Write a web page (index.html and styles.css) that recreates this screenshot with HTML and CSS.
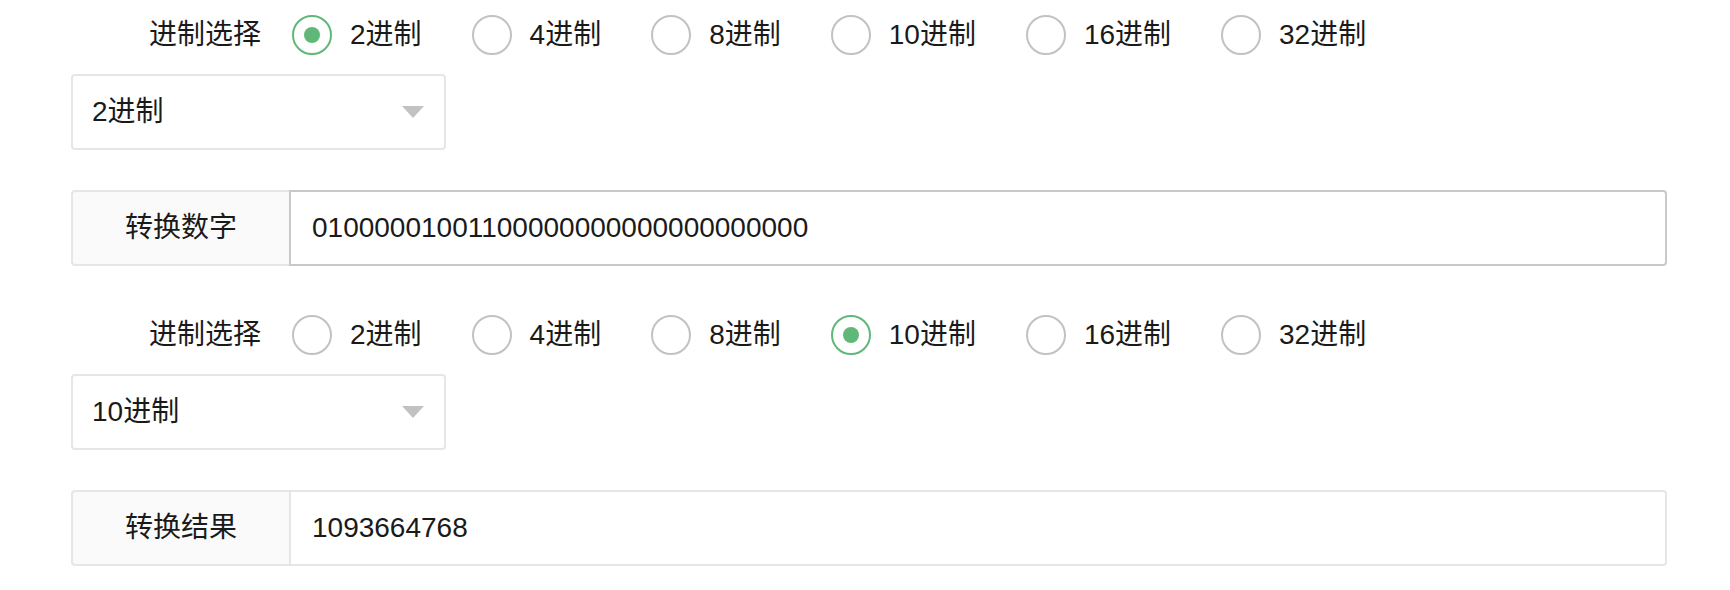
FILE: index.html
```html
<!DOCTYPE html>
<html lang="zh-CN">
<head>
<meta charset="utf-8">
<title>进制转换</title>
<link rel="stylesheet" href="styles.css">
</head>
<body>
<div class="page">
  <section class="block">
    <div class="radio-row">
      <div class="row-label">进制选择</div>
      <div class="radio checked"><span class="circle"></span><span class="radio-text">2进制</span></div>
      <div class="radio"><span class="circle"></span><span class="radio-text">4进制</span></div>
      <div class="radio"><span class="circle"></span><span class="radio-text">8进制</span></div>
      <div class="radio"><span class="circle"></span><span class="radio-text">10进制</span></div>
      <div class="radio"><span class="circle"></span><span class="radio-text">16进制</span></div>
      <div class="radio"><span class="circle"></span><span class="radio-text">32进制</span></div>
    </div>
    <div class="select"><span class="select-text">2进制</span><span class="caret"></span></div>
    <div class="pane">
      <div class="pane-label">转换数字</div>
      <div class="pane-input active">01000001001100000000000000000000</div>
    </div>
  </section>
  <section class="block">
    <div class="radio-row">
      <div class="row-label">进制选择</div>
      <div class="radio"><span class="circle"></span><span class="radio-text">2进制</span></div>
      <div class="radio"><span class="circle"></span><span class="radio-text">4进制</span></div>
      <div class="radio"><span class="circle"></span><span class="radio-text">8进制</span></div>
      <div class="radio checked"><span class="circle"></span><span class="radio-text">10进制</span></div>
      <div class="radio"><span class="circle"></span><span class="radio-text">16进制</span></div>
      <div class="radio"><span class="circle"></span><span class="radio-text">32进制</span></div>
    </div>
    <div class="select"><span class="select-text">10进制</span><span class="caret"></span></div>
    <div class="pane">
      <div class="pane-label">转换结果</div>
      <div class="pane-input">1093664768</div>
    </div>
  </section>
</div>
</body>
</html>
```

FILE: styles.css
```css
* { box-sizing: border-box; }
html, body { margin: 0; padding: 0; background: #fff; }
body {
  font-family: "Liberation Sans", "Noto Sans CJK SC", sans-serif;
  font-size: 28px;
  color: #1a1a1a;
  line-height: 40px;
}
.page {
  padding: 15px 63px 0 71px;
  display: flex;
  flex-direction: column;
  gap: 49px;
}
.block {
  display: flex;
  flex-direction: column;
}
.radio-row {
  display: flex;
  align-items: center;
  height: 40px;
}
.row-label {
  width: 220px;
  padding-right: 30px;
  text-align: right;
  flex: none;
}
.radio {
  display: flex;
  align-items: center;
  margin-left: 1px;
  margin-right: 49px;
}
.circle {
  width: 40px;
  height: 40px;
  border: 2.5px solid #c2c2c2;
  border-radius: 50%;
  flex: none;
  display: flex;
  align-items: center;
  justify-content: center;
  margin-right: 18px;
}
.radio.checked .circle { border-color: #5fb878; }
.radio.checked .circle::after {
  content: "";
  width: 16px;
  height: 16px;
  border-radius: 50%;
  background: #5fb878;
}
.select {
  margin-top: 19px;
  width: 375px;
  height: 76px;
  border: 2px solid #e6e6e6;
  border-radius: 4px;
  display: flex;
  align-items: center;
  justify-content: space-between;
  padding: 0 20px 0 19px;
}
.caret {
  width: 0;
  height: 0;
  border-left: 11px solid transparent;
  border-right: 11px solid transparent;
  border-top: 12px solid #c2c2c2;
}
.pane {
  margin-top: 40px;
  display: flex;
  height: 76px;
}
.pane-label {
  width: 218px;
  flex: none;
  background: #fafafa;
  border: 2px solid #e6e6e6;
  border-right: none;
  border-radius: 4px 0 0 4px;
  display: flex;
  align-items: center;
  justify-content: center;
}
.pane-input {
  flex: 1;
  border: 2px solid #e6e6e6;
  border-radius: 0 4px 4px 0;
  display: flex;
  align-items: center;
  padding-left: 21px;
}
.pane-input.active { border-color: #c9c9c9; }
```
